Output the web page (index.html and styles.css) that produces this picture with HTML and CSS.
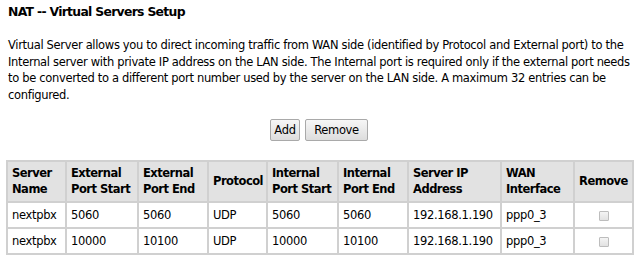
FILE: index.html
```html
<!DOCTYPE html>
<html>
<head>
<meta charset="utf-8">
<link rel="stylesheet" href="styles.css">
</head>
<body>
<div class="page">
  <h1 class="title">NAT -- Virtual Servers Setup</h1>
  <p class="intro">Virtual Server allows you to direct incoming traffic from WAN side (identified by Protocol and External port) to the Internal server with private IP address on the LAN side. The Internal port is required only if the external port needs to be converted to a different port number used by the server on the LAN side. A maximum 32 entries can be configured.</p>
  <div class="actions">
    <button class="btn btn-add" type="button">Add</button>
    <button class="btn btn-remove" type="button">Remove</button>
  </div>
  <table class="grid">
    <colgroup>
      <col class="c1"><col class="c2"><col class="c3"><col class="c4"><col class="c5"><col class="c6"><col class="c7"><col class="c8"><col class="c9">
    </colgroup>
    <thead>
      <tr>
        <th>Server Name</th>
        <th>External Port Start</th>
        <th>External Port End</th>
        <th>Protocol</th>
        <th>Internal Port Start</th>
        <th>Internal Port End</th>
        <th>Server IP Address</th>
        <th>WAN Interface</th>
        <th class="center">Remove</th>
      </tr>
    </thead>
    <tbody>
      <tr>
        <td>nextpbx</td><td>5060</td><td>5060</td><td>UDP</td><td>5060</td><td>5060</td><td>192.168.1.190</td><td>ppp0_3</td>
        <td class="center"><span class="check"></span></td>
      </tr>
      <tr>
        <td>nextpbx</td><td>10000</td><td>10100</td><td>UDP</td><td>10000</td><td>10100</td><td>192.168.1.190</td><td>ppp0_3</td>
        <td class="center"><span class="check"></span></td>
      </tr>
    </tbody>
  </table>
</div>
</body>
</html>
```

FILE: styles.css
```css
html, body {
  margin: 0;
  padding: 0;
  background: #ffffff;
}
body {
  font-family: "DejaVu Sans", Verdana, sans-serif;
  font-size: 11.5px;
  letter-spacing: -0.33px;
  color: #000000;
}
.page {
  padding: 4px 8px 0 8px;
}
.title {
  font-size: 12.4px;
  font-weight: bold;
  letter-spacing: -0.7px;
  margin: 0;
  line-height: 15px;
}
.intro {
  margin: 18px 0 0 0;
  line-height: 16.5px;
}
.actions {
  display: flex;
  justify-content: center;
  gap: 5px;
  margin-top: 16px;
  padding-right: 2px;
}
.btn {
  font-family: "DejaVu Sans", Verdana, sans-serif;
  font-size: 11.5px;
  letter-spacing: -0.33px;
  height: 22px;
  padding: 0;
  border: 1px solid #a9a9a9;
  border-radius: 2px;
  background: linear-gradient(#f6f6f6, #dddddd);
  color: #000;
}
.btn-add { width: 30px; }
.btn-remove { width: 63px; }
.grid {
  margin-top: 19px;
  margin-left: -2px;
  border-collapse: collapse;
  table-layout: fixed;
  width: 626px;
  border: 2px solid #d0d0d0;
}
.grid th, .grid td {
  border: 2px solid #d0d0d0;
  text-align: left;
  padding: 0 3px 0 4px;
  vertical-align: middle;
}
.grid th {
  background: #e2e2e2;
  font-weight: bold;
  letter-spacing: -0.5px;
  line-height: 15.5px;
  height: 39px;
}
.grid td {
  height: 24px;
}
.grid .center { text-align: center; padding-left: 3px; }
.c1 { width: 59px; }
.c2 { width: 72px; }
.c3 { width: 70px; }
.c4 { width: 59px; }
.c5 { width: 71px; }
.c6 { width: 70px; }
.c7 { width: 93px; }
.c8 { width: 73px; }
.c9 { width: 59px; }
.check {
  display: inline-block;
  width: 8px;
  height: 8px;
  border: 1px solid #bdbdbd;
  border-radius: 1px;
  background: linear-gradient(#f4f4f4, #e2e2e2);
  vertical-align: middle;
}
```
